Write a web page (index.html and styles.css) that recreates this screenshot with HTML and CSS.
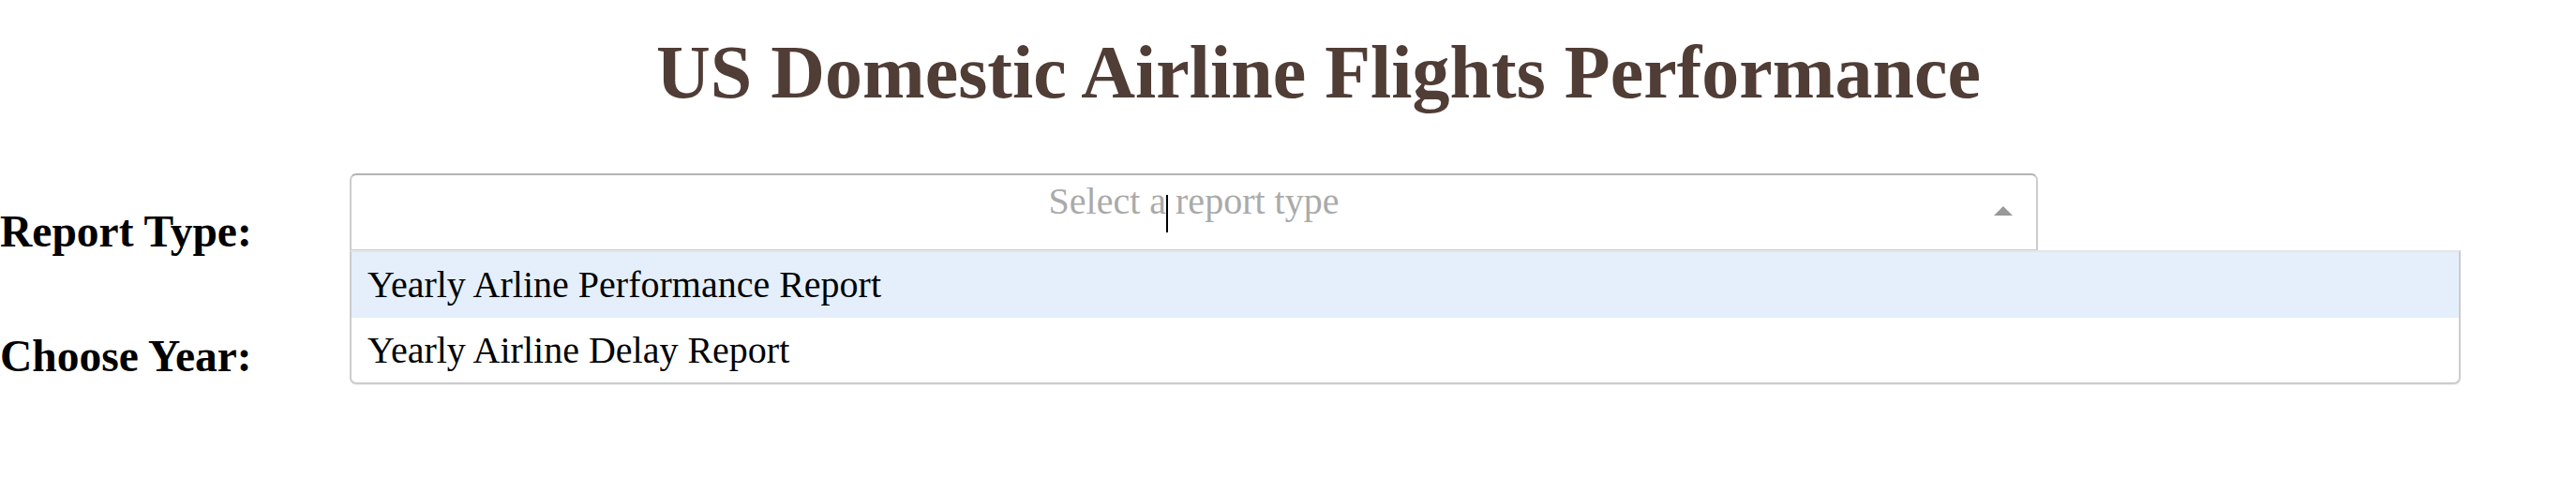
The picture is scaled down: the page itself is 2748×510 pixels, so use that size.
FILE: index.html
```html
<!DOCTYPE html>
<html lang="en">
<head>
<meta charset="utf-8">
<title>US Domestic Airline Flights Performance</title>
<link rel="stylesheet" href="styles.css">
</head>
<body>
<h1 class="title">US Domestic Airline Flights Performance</h1>
<div class="form">
  <div class="row row-report">
    <h2 class="label">Report Type:</h2>
    <div class="select is-open">
      <div class="control">
        <span class="placeholder">Select a report type</span>
        <div class="value">
          <span class="caret"></span>
        </div>
        <span class="arrow-zone"><span class="arrow"></span></span>
      </div>
      <div class="menu">
        <div class="option is-focused">Yearly Arline Performance Report</div>
        <div class="option">Yearly Airline Delay Report</div>
      </div>
    </div>
  </div>
  <div class="row row-year">
    <h2 class="label">Choose Year:</h2>
  </div>
</div>
</body>
</html>
```
FILE: styles.css
```css
html, body {
  margin: 0;
  padding: 0;
  background: #ffffff;
  font-family: "Liberation Serif", "Times New Roman", serif;
}

body {
  min-height: 510px;
}

.title {
  margin: 0;
  padding: 31px 0 0 65px;
  text-align: center;
  font-size: 80px;
  line-height: 92px;
  font-weight: bold;
  color: #503D36;
}

.form {
  display: flex;
  flex-direction: column;
}

.row {
  display: flex;
  align-items: flex-start;
}

.row-report {
  margin-top: 62px;
}

.row-year {
  margin-top: 78px;
}

.label {
  flex: 0 0 373px;
  margin: 34.5px 0 0 0;
  font-size: 47.5px;
  line-height: 55px;
  font-weight: bold;
  color: #000;
}

.row-year .label {
  margin-top: 0;
}

.select {
  position: relative;
  width: 1801px;
}

.control {
  position: relative;
  box-sizing: border-box;
  height: 83px;
  display: flex;
  align-items: flex-start;
  border: 2px solid #ccc;
  border-top-color: #b3b3b3;
  border-radius: 7px 7px 0 0;
  background: #fff;
}

.placeholder {
  position: absolute;
  left: 0;
  right: 0;
  top: 4px;
  text-align: center;
  font-size: 40px;
  line-height: 48px;
  color: #aaa;
  white-space: nowrap;
}

.value {
  flex: 1;
  height: 100%;
  display: flex;
  justify-content: center;
}

.caret {
  display: block;
  width: 2px;
  height: 40px;
  margin: 21px 1px 0 0;
  background: #000;
}

.arrow-zone {
  display: flex;
  justify-content: center;
  width: 44px;
  padding-top: 33px;
  margin-right: 13px;
}

.arrow {
  width: 0;
  height: 0;
  border-left: 10px solid transparent;
  border-right: 10px solid transparent;
  border-bottom: 10px solid #999;
}

.menu {
  position: absolute;
  top: 82px;
  left: 0;
  width: 2252px;
  box-sizing: border-box;
  background: #fff;
  border: 2px solid #ccc;
  border-top-color: #e6e6e6;
  border-radius: 0 0 7px 7px;
  box-shadow: 0 1px 0 rgba(0, 0, 0, 0.06);
  z-index: 2;
}

.option {
  height: 70px;
  box-sizing: border-box;
  padding: 14px 17px;
  font-size: 40px;
  line-height: 42px;
  color: #000;
  white-space: nowrap;
}

.option:last-child {
  height: 69px;
}

.option.is-focused {
  background: #e4effb;
}
```
